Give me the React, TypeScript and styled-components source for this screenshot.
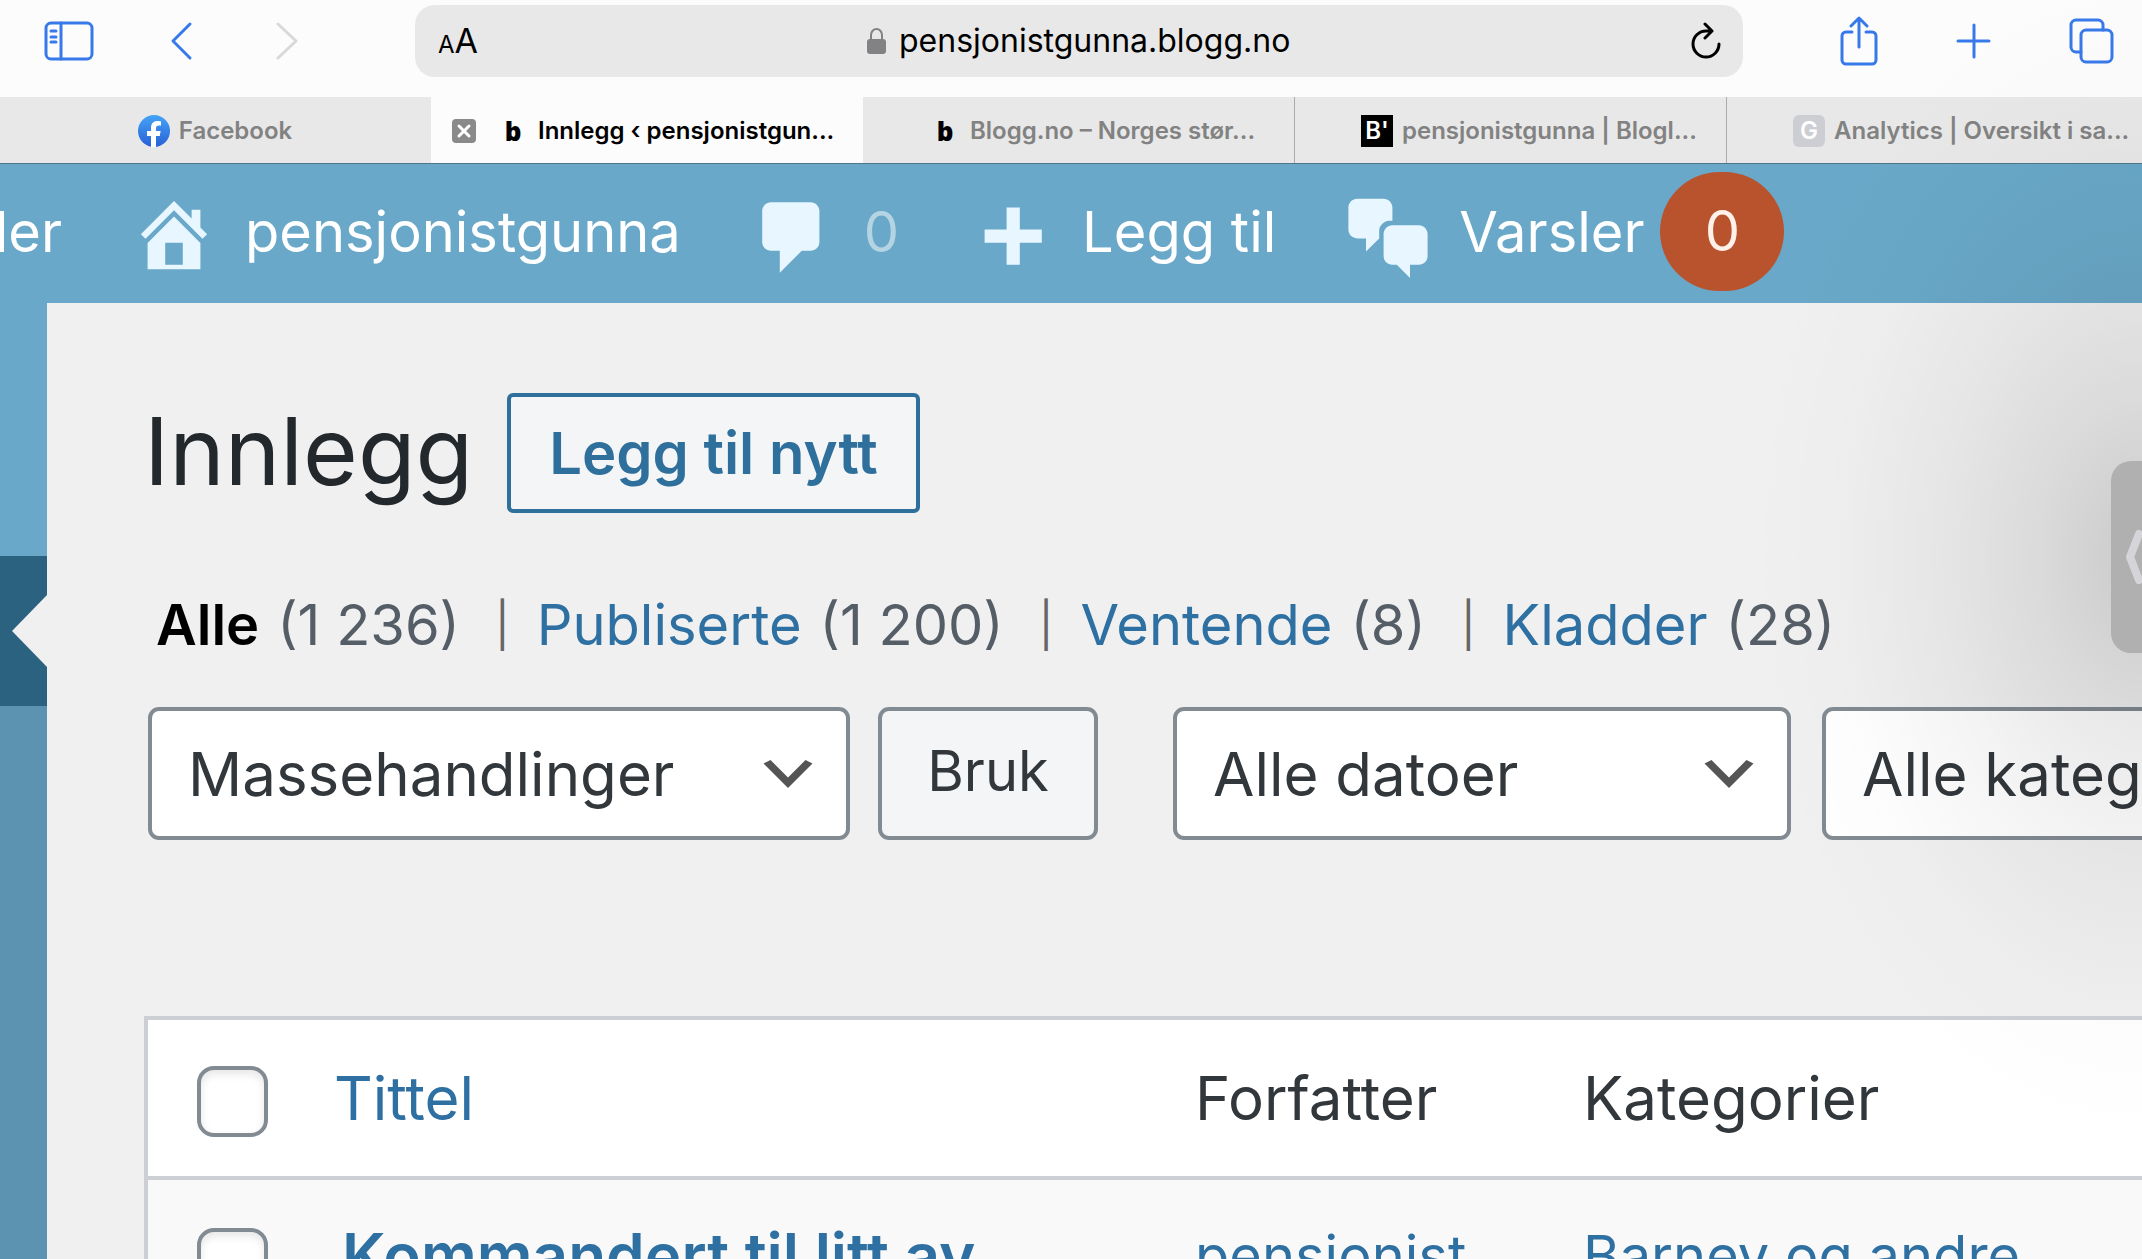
import React from "react";
import styled, { createGlobalStyle } from "styled-components";

const blue = "#2f70a3";
const ink = "#32373c";
const safariBlue = "#3879ea";

const GlobalStyle = createGlobalStyle`
  * { box-sizing: border-box; }
  body {
    margin: 0;
    font-family: Inter, "Liberation Sans", sans-serif;
    color: ${ink};
    background: #f0f0f0;
  }
  button, input, select { font: inherit; color: inherit; margin: 0; }
  a { text-decoration: none; }
`;

const Screen = styled.div`
  position: relative;
  display: flex;
  flex-direction: column;
  height: 100vh;
  overflow: hidden;
`;

/* Browser toolbar */

const Toolbar = styled.header`
  display: flex;
  align-items: flex-start;
  flex: none;
  height: 97px;
  padding: 5px 28px 0 44px;
  background: #fcfcfc;
`;

const ToolGroup = styled.div<{ $gap: number }>`
  display: flex;
  align-items: center;
  flex: none;
  gap: ${(p) => p.$gap}px;
  height: 72px;
`;

const ToolButton = styled.button<{ $muted?: boolean }>`
  display: block;
  padding: 0;
  border: 0;
  background: none;
  color: ${(p) => (p.$muted ? "#d9d9d9" : safariBlue)};

  svg { display: block; }
`;

const AddressBar = styled.div`
  display: grid;
  grid-template-columns: 1fr auto 1fr;
  align-items: center;
  flex: 1;
  height: 72px;
  margin: 0 97px 0 117px;
  padding: 0 22px 0 23px;
  border-radius: 20px;
  background: #e8e8e8;
  color: #000;
`;

const TextSize = styled.button`
  justify-self: start;
  padding: 4px 0 0;
  border: 0;
  background: none;
  font-size: 24px;
  line-height: 40px;
`;

const BigA = styled.span`
  font-size: 34px;
`;

const Address = styled.label`
  display: flex;
  align-items: center;
  gap: 13px;

  svg { display: block; }
`;

const AddressInput = styled.input`
  width: 393px;
  padding: 0;
  border: 0;
  outline: 0;
  background: none;
  font-size: 32px;
  line-height: 40px;
`;

const Reload = styled(ToolButton)`
  justify-self: end;
  color: #000;
`;

/* Browser tabs */

const Tabs = styled.nav`
  display: flex;
  flex: none;
  height: 67px;
  border-bottom: 1px solid #4f7688;
  background: #e8e8e8;
`;

const Tab = styled.div<{ $active?: boolean; $centered?: boolean; $divided?: boolean }>`
  display: flex;
  align-items: center;
  justify-content: ${(p) => (p.$centered ? "center" : "flex-start")};
  flex: none;
  width: 432px;
  padding-top: 1px;
  padding-left: ${(p) => (p.$active ? 21 : p.$centered ? 0 : 66)}px;
  border-right: ${(p) => (p.$divided ? "1px solid #ababab" : "0")};
  background: ${(p) => (p.$active ? "#fcfcfc" : "transparent")};

  &:first-child { margin-left: -1px; }
`;

const TabLink = styled.a<{ $active?: boolean }>`
  display: flex;
  align-items: center;
  gap: 9px;
  color: ${(p) => (p.$active ? "#000" : "#828282")};
  font-size: 24px;
  font-weight: 600;
  line-height: 32px;
  white-space: nowrap;
`;

const CloseTab = styled.button`
  display: block;
  width: 24px;
  height: 24px;
  margin-right: 21px;
  padding: 0;
  border: 0;
  border-radius: 4px;
  background: #8a8a8a;
  color: #fff;

  svg { display: block; }
`;

const Favicon = styled.span<{ $bg?: string; $fg?: string; $radius?: number }>`
  display: flex;
  align-items: center;
  justify-content: center;
  width: 32px;
  height: 32px;
  border-radius: ${(p) => p.$radius ?? 0}px;
  background: ${(p) => p.$bg ?? "transparent"};
  color: ${(p) => p.$fg ?? "#000"};
`;

const BloggMark = styled.span`
  font-family: "Open Sans", Inter, sans-serif;
  font-size: 26px;
  font-weight: 800;
`;

/* Admin bar */

const AdminBar = styled.nav`
  display: flex;
  align-items: center;
  flex: none;
  gap: 68px;
  height: 139px;
  background: #69a8c8;
  color: #fff;
`;

const ClippedItem = styled.a`
  display: flex;
  justify-content: flex-end;
  width: 62px;
  padding-bottom: 4px;
  overflow: hidden;
  color: #fff;
  font-size: 56px;
  line-height: 68px;
`;

const BarItem = styled.a`
  display: flex;
  align-items: center;
  gap: 27px;
  color: #fff;

  svg { display: block; fill: #e8f7ff; }
`;

const BarLabel = styled.span<{ $faded?: boolean }>`
  padding-bottom: 4px;
  font-size: 56px;
  line-height: 68px;
  white-space: nowrap;
  opacity: ${(p) => (p.$faded ? 0.5 : 1)};
`;

const AlertCount = styled.span`
  display: flex;
  align-items: center;
  justify-content: center;
  width: 124px;
  height: 119px;
  margin: 0 0 4px -11px;
  padding-bottom: 1px;
  border-radius: 60px;
  background: #b9532e;
  color: #fff0ea;
  font-size: 56px;
`;

/* Page body */

const Body = styled.div`
  display: flex;
  flex: 1;
  min-height: 0;
`;

const SideMenu = styled.aside`
  display: grid;
  grid-template-rows: 253px 150px 1fr;
  flex: none;
  width: 47px;
  background: linear-gradient(#69a8c8 253px, #5b93b1 253px);
`;

const CurrentItem = styled.a`
  display: flex;
  grid-row: 2;
  align-items: center;
  justify-content: flex-end;
  background: #2b6280;

  &::after {
    content: "";
    border: 36px solid transparent;
    border-left: 0;
    border-right: 35px solid #f0f0f0;
  }
`;

const Main = styled.main`
  flex: 1;
  min-width: 0;
  overflow: hidden;
  padding: 90px 0 0 97px;
  background: #f0f0f0;
`;

const TitleRow = styled.div`
  display: flex;
  align-items: center;
  gap: 34px;
`;

const Title = styled.h1`
  margin: 0;
  padding-bottom: 4px;
  color: #23282d;
  font-size: 94px;
  font-weight: 400;
  line-height: 116px;
`;

const AddNew = styled.button`
  height: 120px;
  padding: 0 38px;
  border: 4px solid #2f6f9c;
  border-radius: 6px;
  background: #f3f5f7;
  color: #2f6f9c;
  font-size: 58px;
  font-weight: 600;
  white-space: nowrap;
`;

const Views = styled.ul`
  display: flex;
  margin: 72px 0 42px;
  padding: 0 0 0 12px;
  list-style: none;
  color: #555d66;
  font-size: 56px;
  line-height: 80px;
  white-space: nowrap;
`;

const View = styled.li`
  display: flex;
  align-items: center;

  &:not(:last-child)::after {
    content: "|";
    margin: 0 27px 0 35px;
    color: #666;
    font-size: 44px;
  }
`;

const ViewLink = styled.a<{ $current?: boolean }>`
  margin-right: 18px;
  color: ${(p) => (p.$current ? "#000" : blue)};
  font-weight: ${(p) => (p.$current ? 600 : 400)};
`;

const Filters = styled.form`
  display: flex;
  gap: 28px;
  width: max-content;
  margin-left: 4px;
`;

const FilterGroup = styled.div`
  display: flex;
  gap: 31px;
  margin-left: 47px;
`;

const SelectBox = styled.div<{ $width: number }>`
  display: grid;
  align-items: center;
  width: ${(p) => p.$width}px;

  > * { grid-area: 1 / 1; }
  svg { justify-self: end; margin-right: 27px; pointer-events: none; }
`;

const Select = styled.select`
  width: 100%;
  height: 133px;
  padding: 0 100px 0 36px;
  border: 4px solid #828a92;
  border-radius: 11px;
  background: #fff;
  font-size: 60px;
  appearance: none;
`;

const Apply = styled.button`
  height: 133px;
  width: 220px;
  padding: 0 0 6px;
  border: 4px solid #828a92;
  border-radius: 11px;
  background: #f3f5f7;
  font-size: 56px;
`;

const PostTable = styled.table`
  width: 2400px;
  margin-top: 176px;
  border: 4px solid #ccd0d4;
  border-spacing: 0;
  background: #fff;
  table-layout: fixed;
`;

const HeadCell = styled.th<{ $width?: number; $pad?: number; $check?: boolean }>`
  width: ${(p) => (p.$width ? `${p.$width}px` : "auto")};
  height: 160px;
  padding: ${(p) => (p.$check ? 6 : 0)}px 0 0 ${(p) => p.$pad ?? 45}px;
  border-bottom: 4px solid #ccd0d4;
  font-size: 60px;
  font-weight: 400;
  line-height: 80px;
  text-align: left;
`;

const Cell = styled.td<{ $pad?: number; $title?: boolean }>`
  padding: 36px 0 40px ${(p) => p.$pad ?? 45}px;
  background: #f9f9f9;
  font-size: ${(p) => (p.$title ? 62 : 56)}px;
  font-weight: ${(p) => (p.$title ? 600 : 400)};
  line-height: 80px;
  vertical-align: top;
  white-space: nowrap;
`;

const CheckCell = styled(Cell)`
  padding-top: 48px;
`;

const TableLink = styled.a`
  color: ${blue};
`;

const Check = styled.input`
  display: block;
  width: 71px;
  height: 71px;
  border: 4px solid #828a92;
  border-radius: 17px;
  background: #fff;
  box-shadow: inset 0 4px 8px rgba(0, 0, 0, 0.1);
  appearance: none;
`;

/* Slide-over handle floating above the page, with its soft shadow */

const HandleShade = styled.div`
  position: absolute;
  top: 0;
  right: 0;
  bottom: 0;
  width: 440px;
  background: radial-gradient(
    ellipse 430px 640px at 100% 557px,
    rgba(0, 0, 0, 0.155),
    rgba(0, 0, 0, 0.137) 8%,
    rgba(0, 0, 0, 0.09) 24%,
    rgba(0, 0, 0, 0.042) 47%,
    rgba(0, 0, 0, 0.012) 70%,
    transparent 92%
  );
  pointer-events: none;
`;

const Handle = styled.button`
  position: absolute;
  top: 461px;
  right: 0;
  width: 31px;
  height: 192px;
  padding: 0 0 0 14px;
  overflow: hidden;
  border: 0;
  border-radius: 20px 0 0 20px;
  background: #b0b0b0;
  color: #d5d5d9;

  svg { display: block; }
`;

const paths = {
  home: "M16 8.5l1.53 1.53-1.06 1.06L10 4.6l-6.47 6.49-1.06-1.06L10 2.5l4 4v-2h2v4zm-6-2.46l6 5.99V18H4v-5.97zM12 17v-5H8v5h4z",
  comment: "M5 2h9c1.1 0 2 .9 2 2v7c0 1.1-.9 2-2 2h-2l-5 5v-5H5c-1.1 0-2-.9-2-2V4c0-1.1.9-2 2-2z",
  plus: "M17 9v3h-5v5H9v-5H4V9h5V4h3v5h5z",
  chat: "M11 6h-.82C9.07 6 8 7.2 8 8.16V10l-3 3v-3H3c-1.1 0-2-.9-2-2V3c0-1.1.9-2 2-2h6c1.1 0 2 .9 2 2v3zm0 1h6c1.1 0 2 .9 2 2v5c0 1.1-.9 2-2 2h-2v3l-3-3h-1c-1.1 0-2-.9-2-2V9c0-1.1.9-2 2-2z",
};

const Dashicon = ({ name, drop = 0 }: { name: keyof typeof paths; drop?: number }) => (
  <svg width="88" height="88" viewBox={`0 ${-drop} 20 20`} aria-hidden="true">
    <path fillRule="evenodd" d={paths[name]} />
  </svg>
);

const Line = ({ w, h, width = 3, children }: { w: number; h: number; width?: number; children: React.ReactNode }) => (
  <svg
    width={w}
    height={h}
    viewBox={`0 0 ${w} ${h}`}
    fill="none"
    stroke="currentColor"
    strokeWidth={width}
    strokeLinecap="round"
    strokeLinejoin="round"
    aria-hidden="true"
  >
    {children}
  </svg>
);

const Dropdown = ({ label, width }: { label: string; width: number }) => (
  <SelectBox $width={width}>
    <Select aria-label={label}>
      <option>{label}</option>
    </Select>
    <svg width="70" height="70" viewBox="0 0 20 20" aria-hidden="true">
      <path d="M5 6l5 5 5-5 2 1-7 7-7-7 2-1z" fill="#555" />
    </svg>
  </SelectBox>
);

const views = [
  { name: "Alle", count: "1 236", current: true },
  { name: "Publiserte", count: "1 200" },
  { name: "Ventende", count: "8" },
  { name: "Kladder", count: "28" },
];

export default function App() {
  return (
    <Screen>
      <GlobalStyle />
      <Toolbar>
        <ToolGroup $gap={76}>
          <ToolButton aria-label="Sidepanel">
            <Line w={50} h={40} width={3}>
              <rect x="2" y="2" width="46" height="36" rx="5" />
              <path d="M17 2v36M7 10h5M7 16h5M7 21h5" />
            </Line>
          </ToolButton>
          <ToolButton aria-label="Tilbake">
            <Line w={26} h={40}>
              <path d="M20 3L3 20l17 17" />
            </Line>
          </ToolButton>
          <ToolButton aria-label="Frem" $muted>
            <Line w={26} h={40}>
              <path d="M6 3l18 17L6 37" />
            </Line>
          </ToolButton>
        </ToolGroup>
        <AddressBar>
          <TextSize aria-label="Tekststørrelse">
            A<BigA>A</BigA>
          </TextSize>
          <Address>
            <svg width="19" height="28" viewBox="0 0 19 28" aria-hidden="true">
              <path d="M4 13V8a5.500 6 0 0 1 11 0v5" fill="none" stroke="#828285" strokeWidth="2" />
              <rect x="0" y="12" width="19" height="15" rx="3" fill="#828285" />
            </svg>
            <AddressInput aria-label="Adresse" defaultValue="pensjonistgunna.blogg.no" />
          </Address>
          <Reload aria-label="Last inn på nytt">
            <Line w={32} h={38}>
              <path d="M23 9H17a13 13 0 1 0 13 13M16 2l7 7-7 7" />
            </Line>
          </Reload>
        </AddressBar>
        <ToolGroup $gap={78}>
          <ToolButton aria-label="Del">
            <Line w={38} h={50}>
              <path d="M12 16H6a4 4 0 0 0-4 4v24a4 4 0 0 0 4 4h26a4 4 0 0 0 4-4V20a4 4 0 0 0-4-4h-6M19 31V2M11 10l8-8 8 8" />
            </Line>
          </ToolButton>
          <ToolButton aria-label="Ny fane">
            <Line w={35} h={36}>
              <path d="M18 2v32M2 18h31" />
            </Line>
          </ToolButton>
          <ToolButton aria-label="Faner">
            <Line w={45} h={46}>
              <rect x="12" y="12" width="31" height="32" rx="5" />
              <path d="M12 34H7a5 5 0 0 1-5-5V7a5 5 0 0 1 5-5h22a5 5 0 0 1 5 5v5" />
            </Line>
          </ToolButton>
        </ToolGroup>
      </Toolbar>

      <Tabs>
        <Tab $centered>
          <TabLink href="#facebook">
            <svg width="32" height="32" viewBox="0 0 32 32" aria-hidden="true">
              <defs>
                <linearGradient id="fb" x1="0" y1="0" x2="0" y2="1">
                  <stop offset="0" stopColor="#45a4f5" />
                  <stop offset="1" stopColor="#2860d8" />
                </linearGradient>
              </defs>
              <circle cx="16" cy="16" r="16" fill="url(#fb)" />
              <path
                d="M13 32V21H9v-5h4v-3c0-5 3-7 6-7 2 0 4 .4 4 .4v4h-2.200c-2 0-2.800 1.200-2.800 2.600v3h4.600l-.8 5H18v11z"
                fill="#fff"
              />
            </svg>
            Facebook
          </TabLink>
        </Tab>
        <Tab $active>
          <CloseTab aria-label="Lukk fane">
            <Line w={24} h={24}>
              <path d="M7 7l10 10M17 7L7 17" />
            </Line>
          </CloseTab>
          <TabLink href="#innlegg" $active>
            <Favicon><BloggMark>b</BloggMark></Favicon>
            Innlegg ‹ pensjonistgun...
          </TabLink>
        </Tab>
        <Tab $divided>
          <TabLink href="#blogg">
            <Favicon><BloggMark>b</BloggMark></Favicon>
            Blogg.no – Norges stør...
          </TabLink>
        </Tab>
        <Tab $divided>
          <TabLink href="#bloglovin">
            <Favicon $bg="#000" $fg="#fff">B'</Favicon>
            pensjonistgunna | Blogl...
          </TabLink>
        </Tab>
        <Tab>
          <TabLink href="#analytics">
            <Favicon $bg="#cdced4" $fg="#fff" $radius={6}>G</Favicon>
            Analytics | Oversikt i sa...
          </TabLink>
        </Tab>
      </Tabs>

      <AdminBar>
        <ClippedItem href="#sider">der</ClippedItem>
        <BarItem href="#hjem">
          <Dashicon name="home" />
          <BarLabel>pensjonistgunna</BarLabel>
        </BarItem>
        <BarItem href="#kommentarer">
          <Dashicon name="comment" drop={0.8} />
          <BarLabel $faded>0</BarLabel>
        </BarItem>
        <BarItem href="#ny">
          <Dashicon name="plus" />
          <BarLabel>Legg til</BarLabel>
        </BarItem>
        <BarItem href="#varsler">
          <Dashicon name="chat" drop={1} />
          <BarLabel>Varsler</BarLabel>
          <AlertCount>0</AlertCount>
        </BarItem>
      </AdminBar>

      <Body>
        <SideMenu>
          <CurrentItem href="#innlegg" aria-label="Innlegg" />
        </SideMenu>
        <Main>
          <TitleRow>
            <Title>Innlegg</Title>
            <AddNew>Legg til nytt</AddNew>
          </TitleRow>
          <Views>
            {views.map((v) => (
              <View key={v.name}>
                <ViewLink href={`#${v.name}`} $current={v.current}>{v.name}</ViewLink>
                ({v.count})
              </View>
            ))}
          </Views>
          <Filters>
            <Dropdown label="Massehandlinger" width={702} />
            <Apply type="button">Bruk</Apply>
            <FilterGroup>
              <Dropdown label="Alle datoer" width={618} />
              <Dropdown label="Alle kategorier" width={660} />
            </FilterGroup>
          </Filters>
          <PostTable>
            <thead>
              <tr>
                <HeadCell $width={152} $pad={49} $check>
                  <Check type="checkbox" aria-label="Velg alle" />
                </HeadCell>
                <HeadCell $width={850} $pad={34}>
                  <TableLink href="#tittel">Tittel</TableLink>
                </HeadCell>
                <HeadCell $width={388}>Forfatter</HeadCell>
                <HeadCell>Kategorier</HeadCell>
              </tr>
            </thead>
            <tbody>
              <tr>
                <CheckCell $pad={49}>
                  <Check type="checkbox" aria-label="Velg innlegg" />
                </CheckCell>
                <Cell $title $pad={42}>
                  <TableLink href="#innlegg-1">Kommandert til litt av</TableLink>
                </Cell>
                <Cell><TableLink href="#forfatter">pensjonist</TableLink></Cell>
                <Cell><TableLink href="#kategori">Barney og andre</TableLink></Cell>
              </tr>
            </tbody>
          </PostTable>
        </Main>
      </Body>

      <HandleShade />
      <Handle aria-label="Vis vindu">
        <Line w={30} h={56} width={8}>
          <path d="M14 5L5 28l9 23" />
        </Line>
      </Handle>
    </Screen>
  );
}
